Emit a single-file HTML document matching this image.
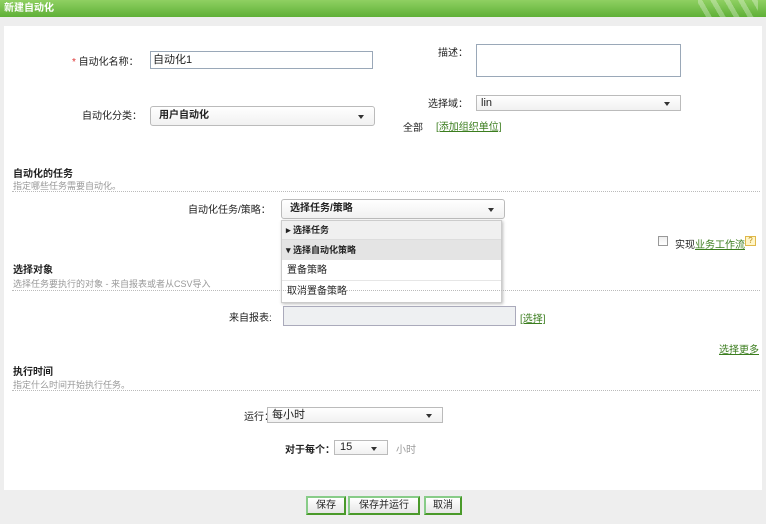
<!DOCTYPE html>
<html><head><meta charset="utf-8"><style>
*{box-sizing:border-box;margin:0;padding:0}
body{width:766px;height:524px;overflow:hidden;background:#eeeeee;font-family:"Liberation Sans","Noto Sans CJK SC",sans-serif;font-size:10px;color:#222;position:relative}
.a{position:absolute;white-space:nowrap}
.hdr{left:0;top:0;width:766px;height:17px;background:linear-gradient(#8fd062,#5fb037);color:#fff;font-weight:bold;font-size:10px;line-height:17px;padding-left:4px}
.panel{left:4px;top:26px;width:758px;height:464px;background:#fff}
.inp{border:1px solid #9aa8b8;background:#fff}
.sel{border:1px solid #bbb;border-radius:3px;background:linear-gradient(#fff,#f1f1f1);padding-left:8px;line-height:16px}
.sel:after{content:"";position:absolute;right:10px;top:50%;margin-top:-1px;border:3px solid transparent;border-top:4px solid #333}
.h{font-weight:bold;font-size:10px}
.sub{color:#999;font-size:9px}
.dash{left:12px;width:748px;border-top:1px dotted #bbb;height:0}
.lnk{color:#3b7d1e;text-decoration:underline}
.btn{top:496px;height:19px;border:2px solid #4a9a2a;border-top-color:#8c8;border-left-color:#8c8;background:linear-gradient(#fff,#e6e6e6);text-align:center;line-height:15px;font-size:10px}
</style></head><body>
<div class="a hdr">新建自动化</div>
<div class="a" style="right:8px;top:0;width:60px;height:17px;background:repeating-linear-gradient(60deg,transparent 0 7px,rgba(255,255,255,.3) 7px 12px)"></div>
<div class="a panel"></div>
<div class="a" style="left:72px;top:53px"><span style="color:#d33">*</span> 自动化名称：</div>
<div class="a inp" style="left:150px;top:51px;width:223px;height:18px;padding:2px 2px;line-height:13px;font-size:11px">自动化1</div>
<div class="a" style="left:438px;top:44px">描述：</div>
<div class="a inp" style="left:476px;top:44px;width:205px;height:33px"></div>
<div class="a" style="left:82px;top:107px">自动化分类：</div>
<div class="a sel" style="left:150px;top:106px;width:225px;height:20px;font-weight:bold;line-height:18px">用户自动化</div>
<div class="a" style="left:428px;top:95px">选择域：</div>
<div class="a sel" style="left:476px;top:95px;width:205px;height:16px;border-radius:0;padding-left:4px;line-height:14px;font-size:11px">lin</div>
<div class="a" style="left:403px;top:119px">全部</div>
<div class="a lnk" style="left:436px;top:118px">[添加组织单位]</div>

<div class="a h" style="left:13px;top:165px">自动化的任务</div>
<div class="a sub" style="left:13px;top:179px">指定哪些任务需要自动化。</div>
<div class="a dash" style="top:191px"></div>
<div class="a" style="left:188px;top:201px">自动化任务/策略：</div>
<div class="a sel" style="left:281px;top:199px;width:224px;height:20px;font-weight:bold;line-height:18px">选择任务/策略</div>
<div class="a" style="left:281px;top:220px;width:221px;height:83px;border:1px solid #ccc;background:#fff;box-shadow:1px 1px 3px #bbb">
 <div style="height:19px;background:#f0f0f0;border-bottom:1px solid #ddd;font-weight:bold;font-size:9px;line-height:19px;padding-left:4px">▸ 选择任务</div>
 <div style="height:20px;background:#e4e4e4;font-weight:bold;font-size:9px;line-height:20px;padding-left:4px">▾ 选择自动化策略</div>
 <div style="height:21px;border-bottom:1px solid #e6e6e6;line-height:21px;padding-left:5px">置备策略</div>
 <div style="height:21px;line-height:21px;padding-left:5px">取消置备策略</div>
</div>
<div class="a" style="left:658px;top:236px;width:10px;height:10px;border:1px solid #999;background:linear-gradient(#eee,#fff)"></div>
<div class="a" style="left:675px;top:236px">实现<span class="lnk">业务工作流</span></div>
<div class="a" style="left:745px;top:236px;width:11px;height:10px;border:1px solid #e0b84a;background:#fff5c8;color:#b88a10;font-size:8px;line-height:8px;text-align:center">?</div>

<div class="a h" style="left:13px;top:261px">选择对象</div>
<div class="a sub" style="left:13px;top:277px">选择任务要执行的对象 - 来自报表或者从CSV导入</div>
<div class="a dash" style="top:290px"></div>
<div class="a" style="left:229px;top:309px">来自报表:</div>
<div class="a" style="left:283px;top:306px;width:233px;height:20px;border:1px solid #aab;background:#eef0f2"></div>
<div class="a lnk" style="left:520px;top:310px">[选择]</div>
<div class="a lnk" style="left:719px;top:341px">选择更多</div>

<div class="a h" style="left:13px;top:363px">执行时间</div>
<div class="a sub" style="left:13px;top:378px">指定什么时间开始执行任务。</div>
<div class="a dash" style="top:390px"></div>
<div class="a" style="left:244px;top:408px">运行：</div>
<div class="a sel" style="left:267px;top:407px;width:176px;height:16px;border-radius:0;padding-left:4px;line-height:14px;font-size:11px">每小时</div>
<div class="a" style="left:285px;top:441px;font-weight:bold">对于每个：</div>
<div class="a sel" style="left:334px;top:440px;width:54px;height:15px;border-radius:0;padding-left:5px;line-height:13px;font-size:11px">15</div>
<div class="a" style="left:396px;top:441px;color:#999">小时</div>

<div class="a btn" style="left:306px;width:40px">保存</div>
<div class="a btn" style="left:348px;width:72px">保存并运行</div>
<div class="a btn" style="left:424px;width:38px">取消</div>
</body></html>
